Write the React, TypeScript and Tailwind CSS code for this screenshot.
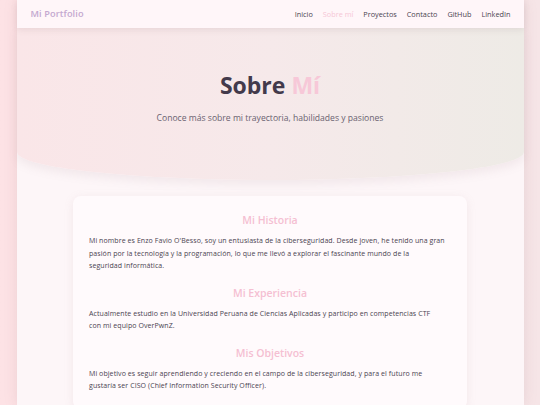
import React from "react";

const links = ["Inicio", "Sobre mí", "Proyectos", "Contacto", "GitHub", "LinkedIn"];

const sections = [
  {
    title: "Mi Historia",
    lines: [
      "Mi nombre es Enzo Favio O'Besso, soy un entusiasta de la ciberseguridad. Desde joven, he tenido una gran",
      "pasión por la tecnología y la programación, lo que me llevó a explorar el fascinante mundo de la",
      "seguridad informática.",
    ],
  },
  {
    title: "Mi Experiencia",
    lines: [
      "Actualmente estudio en la Universidad Peruana de Ciencias Aplicadas y participo en competencias CTF",
      "con mi equipo OverPwnZ.",
    ],
  },
  {
    title: "Mis Objetivos",
    lines: [
      "Mi objetivo es seguir aprendiendo y creciendo en el campo de la ciberseguridad, y para el futuro me",
      "gustaría ser CISO (Chief Information Security Officer).",
    ],
  },
];

export default function App() {
  return (
    <div
      className="min-h-[405px] h-[405px] overflow-hidden bg-gradient-to-r from-[#fde2e5] to-[#f6e5e7]"
      style={{ fontFamily: "'Open Sans', 'Noto Sans', sans-serif" }}
    >
      <div className="mx-auto w-[507px] h-full bg-[#fdf6f8] shadow-[0_0_12px_rgba(160,120,130,0.18)]">
        {/* Navbar */}
        <nav className="relative z-20 h-[28px] flex items-center justify-between pl-[14px] pr-[13px] bg-[#fff6f9] shadow-[0_2px_6px_rgba(120,90,100,0.12)]">
          <span className="text-[9.2px] font-semibold text-[#c4a8d0] tracking-[0.1px]">Mi Portfolio</span>
          <ul className="flex items-center gap-[10px] text-[7.3px] text-[#4a4350]">
            {links.map((l) => (
              <li key={l} className={l === "Sobre mí" ? "text-[#f6c6d6]" : ""}>
                {l}
              </li>
            ))}
          </ul>
        </nav>

        {/* Hero */}
        <header className="relative z-10 h-[152px] flex flex-col items-center pt-[42px] bg-gradient-to-r from-[#fae6e8] via-[#f6e9ea] to-[#eeebe6] rounded-b-[50%_28px] shadow-[0_5px_10px_rgba(150,120,130,0.10)]">
          <h1 className="text-[23px] font-bold leading-[30px] text-[#433a4b]">
            Sobre <span className="text-[#f7c8d8]">Mí</span>
          </h1>
          <p className="mt-[12px] text-[8.6px] text-[#6a6270]">
            Conoce más sobre mi trayectoria, habilidades y pasiones
          </p>
        </header>

        {/* Card */}
        <main className="pt-[16px] flex justify-center">
          <section className="w-[394px] rounded-[8px] bg-[#fffafc] shadow-[0_2px_10px_rgba(180,140,150,0.14)] px-[16px] pt-[17px] pb-[16px]">
            {sections.map((s, i) => (
              <div key={s.title} className={i > 0 ? "mt-[13px]" : ""}>
                <h2 className="text-center text-[10.5px] font-semibold leading-[14px] text-[#f5bfd2]">
                  {s.title}
                </h2>
                <p className="mt-[8px] text-[7px] tracking-[0.08px] leading-[12.5px] text-[#4a4350] whitespace-nowrap">
                  {s.lines.map((line, j) => (
                    <React.Fragment key={j}>
                      {line}
                      {j < s.lines.length - 1 && <br />}
                    </React.Fragment>
                  ))}
                </p>
              </div>
            ))}
          </section>
        </main>
      </div>
    </div>
  );
}
